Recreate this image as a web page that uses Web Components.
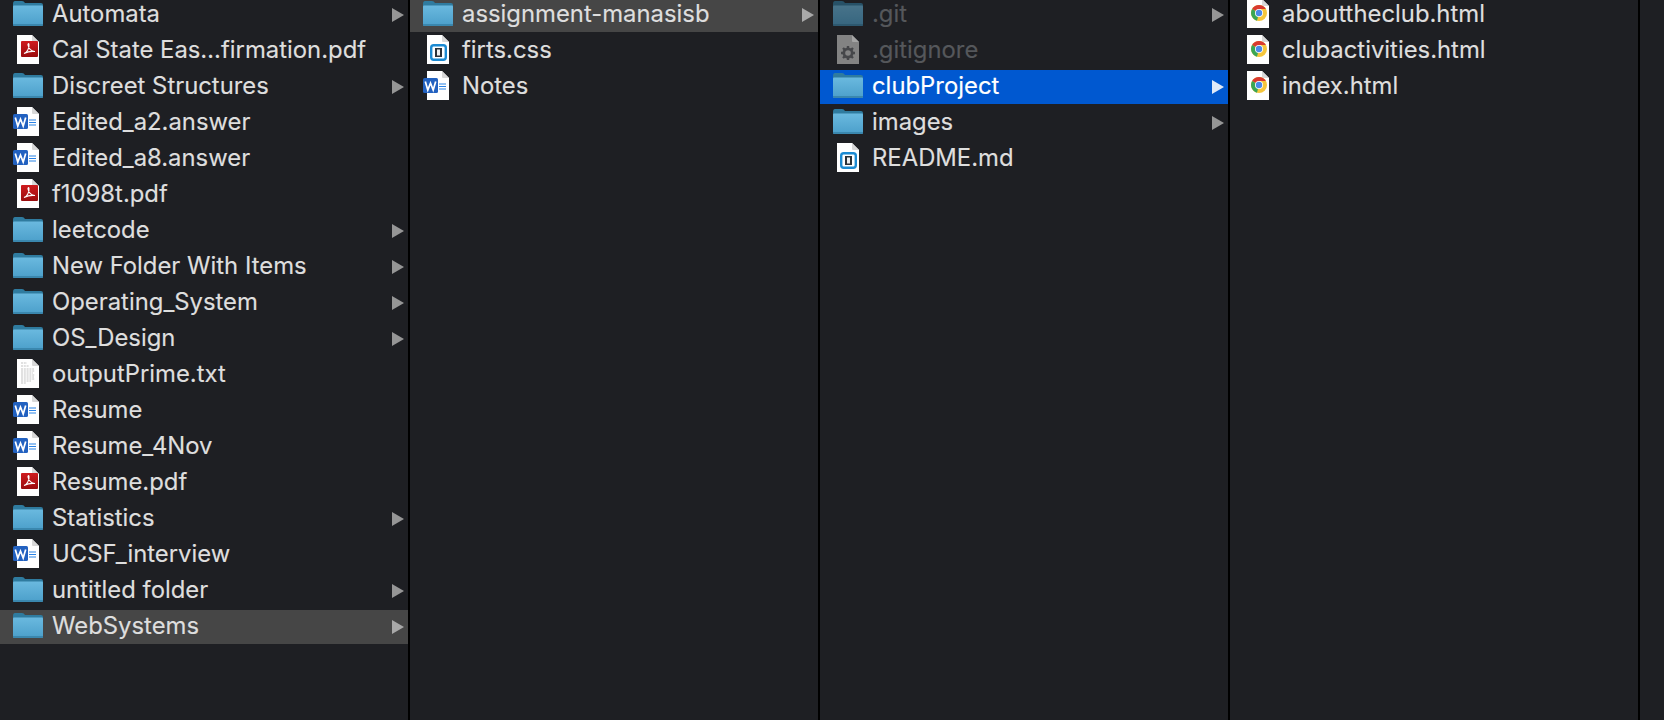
<!DOCTYPE html>
<html>
<head>
<meta charset="utf-8">
<title>Finder</title>
<style>
  html, body { margin: 0; height: 100%; overflow: hidden; background: #000; }
</style>
</head>
<body>
<finder-browser>
  <finder-column>
    <finder-row icon="folder" arrow>Automata</finder-row>
    <finder-row icon="pdf">Cal State Eas…firmation.pdf</finder-row>
    <finder-row icon="folder" arrow>Discreet Structures</finder-row>
    <finder-row icon="word">Edited_a2.answer</finder-row>
    <finder-row icon="word">Edited_a8.answer</finder-row>
    <finder-row icon="pdf">f1098t.pdf</finder-row>
    <finder-row icon="folder" arrow>leetcode</finder-row>
    <finder-row icon="folder" arrow>New Folder With Items</finder-row>
    <finder-row icon="folder" arrow>Operating_System</finder-row>
    <finder-row icon="folder" arrow>OS_Design</finder-row>
    <finder-row icon="txt">outputPrime.txt</finder-row>
    <finder-row icon="word">Resume</finder-row>
    <finder-row icon="word">Resume_4Nov</finder-row>
    <finder-row icon="pdf">Resume.pdf</finder-row>
    <finder-row icon="folder" arrow>Statistics</finder-row>
    <finder-row icon="word">UCSF_interview</finder-row>
    <finder-row icon="folder" arrow>untitled folder</finder-row>
    <finder-row icon="folder" arrow state="open">WebSystems</finder-row>
  </finder-column>
  <finder-column>
    <finder-row icon="folder" arrow state="open">assignment-manasisb</finder-row>
    <finder-row icon="brackets">firts.css</finder-row>
    <finder-row icon="word">Notes</finder-row>
  </finder-column>
  <finder-column>
    <finder-row icon="folder" arrow state="hidden">.git</finder-row>
    <finder-row icon="gear" state="hidden">.gitignore</finder-row>
    <finder-row icon="folder" arrow state="selected">clubProject</finder-row>
    <finder-row icon="folder" arrow>images</finder-row>
    <finder-row icon="brackets">README.md</finder-row>
  </finder-column>
  <finder-column>
    <finder-row icon="chrome">abouttheclub.html</finder-row>
    <finder-row icon="chrome">clubactivities.html</finder-row>
    <finder-row icon="chrome">index.html</finder-row>
  </finder-column>
  <finder-column></finder-column>
</finder-browser>

<script>
const PAGE = '<path d="M5 0H20L27 7V29H5Z" fill="#fff"/><path d="M20 0L27 7H21Q20 7 20 6Z" fill="#d8d8d8"/>'

const ICONS = {
  folder: `
    <defs><linearGradient id="f" x1="0" y1="0" x2="0" y2="1">
      <stop offset="0" stop-color="#6ab9df"/><stop offset="1" stop-color="#4b9fca"/>
    </linearGradient></defs>
    <path d="M1 5Q1 2 3 2H10Q12 2 13 4H29Q31 4 31 6V12H1Z" fill="#2f7b9f"/>
    <path d="M1 7.500Q1 6.500 2 6.500H30Q31 6.500 31 7.500V25.500Q31 27 29.500 27H2.500Q1 27 1 25.500Z" fill="url(#f)"/>
    <path d="M1 25.500Q1 27 2.500 27H29.500Q31 27 31 25.500V25H1Z" fill="#3a87ae"/>`,
  pdf: PAGE + `
    <defs><linearGradient id="r" x1="0" y1="0" x2="0" y2="1">
      <stop offset="0" stop-color="#cf1b1e"/><stop offset="1" stop-color="#9a0c0e"/>
    </linearGradient></defs>
    <rect x="9" y="6" width="17" height="16" rx="1" fill="url(#r)"/>
    <path d="M12 18.500C15 17.500 17.500 13 17 9.500C16.700 8 15.800 8.500 16 10C16.500 13.500 19.500 16.500 23 16.500C19.500 16 15 17 12 18.500Z" fill="none" stroke="#fff" stroke-width="1.100"/>`,
  word: PAGE + `
    <path d="M17 13H24M17 15.500H24M17 18H24" stroke="#2b83e6" stroke-width="1.200"/>
    <rect x="1" y="7" width="15" height="15" rx="1.500" fill="#2261c0"/>
    <path d="M3.300 10.500L5.800 19L8.500 12L11.200 19L13.700 10.500" fill="none" stroke="#fff" stroke-width="1.700"/>`,
  txt: PAGE + `
    <path d="M9 4H15M9 7H17M9 10H22M9 12H23M9 14H21M9 16H23M9 18H22M9 20H23M9 22H19M9 24H14" stroke="#b4b4b4" stroke-width=".8" stroke-dasharray="2 .8"/>`,
  brackets: PAGE + `
    <rect x="9.200" y="10.200" width="14.600" height="14.600" rx="2.500" fill="none" stroke="#1b8ad2" stroke-width="2.400"/>
    <rect x="13" y="13" width="7" height="9" fill="#2a3138"/>
    <rect x="15" y="14.500" width="3" height="6" fill="#f0f0f0"/>`,
  gear: `
    <path d="M5 0H20L27 7V29H5Z" fill="#838383"/>
    <path d="M20 0L27 7H21Q20 7 20 6Z" fill="#a4a4a4"/>
    <path d="M16 11V25M9 18H23M11 13L21 23M21 13L11 23" stroke="#46474a" stroke-width="2.400"/>
    <circle cx="16" cy="18" r="5.500" fill="#46474a"/>
    <circle cx="16" cy="18" r="2.800" fill="#838383"/>`,
  chrome: PAGE + `
    <circle cx="17" cy="14" r="8" fill="#f5c63c"/>
    <path d="M17 14L10.100 10A8 8 0 0 1 23.900 10H17Z" fill="#d93a30"/>
    <path d="M17 14L10.100 10A8 8 0 0 0 15 21.700L17 14Z" fill="#3aa655"/>
    <circle cx="17" cy="14" r="4" fill="#fff"/>
    <circle cx="17" cy="14" r="3.200" fill="#4a89e8"/>`
}

class FinderBrowser extends HTMLElement {
  constructor() {
    super()
    this.attachShadow({ mode: 'open' }).innerHTML = `
      <style>
        :host { display: grid; grid-template-columns: repeat(4, 408px) 1fr; column-gap: 2px; height: 722px; margin-top: -2px; }
      </style>
      <slot></slot>`
  }
}

class FinderColumn extends HTMLElement {
  constructor() {
    super()
    this.attachShadow({ mode: 'open' }).innerHTML = `
      <style>
        :host { display: flex; flex-direction: column; gap: 2px; background: #1e1f23; min-width: 0; }
      </style>
      <slot></slot>`
  }
}

class FinderRow extends HTMLElement {
  constructor() {
    super()
    this.attachShadow({ mode: 'open' })
  }

  connectedCallback() {
    const icon = this.getAttribute('icon') || 'txt'
    const arrow = this.hasAttribute('arrow')
      ? '<svg class="arrow" width="12" height="14" viewBox="0 0 12 14"><path d="M0 0L12 7L0 14Z"/></svg>'
      : ''
    this.shadowRoot.innerHTML = `
      <style>
        :host { display: flex; align-items: center; height: 34px; padding-left: 12px; color: #dedede; font: 23.85px/32px Inter, "Liberation Sans", sans-serif; white-space: nowrap; -webkit-text-stroke: .15px currentColor; }
        :host([state="open"]) { background: #464646; }
        :host([state="selected"]) { background: #0058d0; color: #fff; }
        :host([state="hidden"]) { color: #55575b; }
        :host([state="hidden"][icon="folder"]) .icon { opacity: .55; }
        .icon { flex: none; width: 32px; height: 32px; margin-right: 8px; overflow: visible; }
        .name { flex: 1; min-width: 0; padding-bottom: 2px; }
        .arrow { flex: none; margin-right: 4px; fill: #969696; }
        :host([state="open"]) .arrow { fill: #a9a9a9; }
        :host([state="selected"]) .arrow { fill: #dfe9f8; }
      </style>
      <svg class="icon" viewBox="0 0 32 32">${ICONS[icon]}</svg>
      <span class="name"><slot></slot></span>
      ${arrow}`
  }
}

customElements.define('finder-browser', FinderBrowser)
customElements.define('finder-column', FinderColumn)
customElements.define('finder-row', FinderRow)
</script>
</body>
</html>
